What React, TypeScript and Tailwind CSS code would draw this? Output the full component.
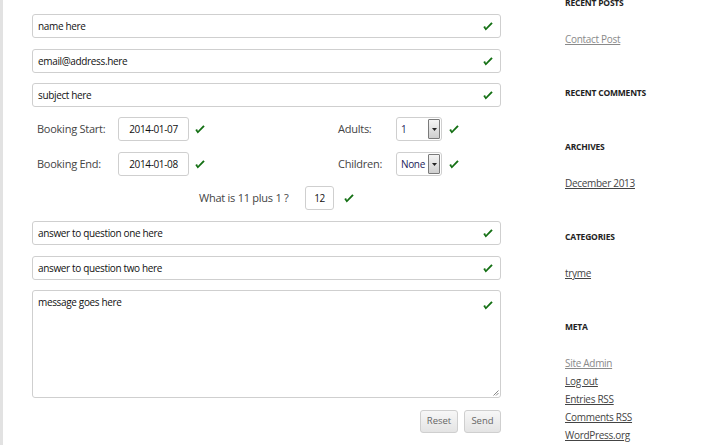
import React from "react";

const font = { fontFamily: '"Open Sans", "Noto Sans", sans-serif' };

function Check({ className = "" }: { className?: string }) {
  return (
    <svg width="10" height="9" viewBox="0 0 10 9" className={`shrink-0 ${className}`}>
      <path d="M0.3 5 L2.7 8.6 L9.7 1.4 L8.3 0.3 L2.9 6 L2.1 4 Z" fill="#136f13" />
    </svg>
  );
}

function TextField({ text, mt }: { text: string; mt: string }) {
  return (
    <div className={`${mt} flex h-[24px] w-[469px] items-center justify-between rounded-[3px] border border-[#cfcfcf] bg-white pl-[5px] pr-[7px]`}>
      <span className="text-[10px] tracking-[-0.35px] text-[#111]">{text}</span>
      <Check />
    </div>
  );
}

function SelectBox({ value }: { value: string }) {
  return (
    <div className="flex h-[24px] w-[46px] shrink-0 items-stretch rounded-[3px] border border-[#cfcfcf] bg-white">
      <div className="flex flex-1 items-center overflow-hidden whitespace-nowrap pl-[4px] text-[10px] tracking-[-0.35px] text-[#1c1c5a]">{value}</div>
      <div className="my-[1px] mr-[1px] flex w-[12px] shrink-0 items-center justify-center rounded-[1px] border border-[#7a7a7a] bg-gradient-to-b from-[#f4f4f4] to-[#cfcfcf]">
        <svg width="5" height="3" viewBox="0 0 5 3">
          <path d="M0 0 L5 0 L2.5 3 Z" fill="#222" />
        </svg>
      </div>
    </div>
  );
}

function SmallBox({ text, w }: { text: string; w: string }) {
  return (
    <div className={`flex h-[24px] ${w} shrink-0 items-center justify-center whitespace-nowrap rounded-[3px] border border-[#cfcfcf] bg-white text-[10px] tracking-[-0.35px] text-[#111]`}>
      {text}
    </div>
  );
}

function Label({ children, w }: { children: React.ReactNode; w: string }) {
  return <span className={`${w} shrink-0 whitespace-nowrap text-[11px] tracking-[-0.25px] text-[#444]`}>{children}</span>;
}

function SideHeading({ children }: { children: React.ReactNode }) {
  return <div className="h-[18px] whitespace-nowrap text-[8.5px] font-bold leading-[18px] tracking-[-0.2px] text-[#222]">{children}</div>;
}

function SideLink({ children, light }: { children: React.ReactNode; light?: boolean }) {
  return (
    <div className={`h-[18px] whitespace-nowrap text-[10px] leading-[18px] tracking-[-0.3px] underline ${light ? "text-[#8a8a8a]" : "text-[#444]"}`}>
      {children}
    </div>
  );
}

export default function App() {
  return (
    <div className="flex h-[445px] w-[701px] overflow-hidden bg-white" style={font}>
      <div className="h-full w-[3px] shrink-0 bg-[#e2e2e2]" />
      <div className="ml-[29px] flex w-[469px] shrink-0 flex-col">
        <TextField text="name here" mt="mt-[14px]" />
        <TextField text="email@address.here" mt="mt-[11px]" />
        <TextField text="subject here" mt="mt-[10px]" />

        <div className="mt-[10px] flex h-[24px] items-center">
          <span className="ml-[5px]" />
          <Label w="w-[81px]">Booking Start:</Label>
          <SmallBox text="2014-01-07" w="w-[71px]" />
          <Check className="ml-[6px]" />
          <span className="ml-[133px]" />
          <Label w="w-[58px]">Adults:</Label>
          <SelectBox value="1" />
          <Check className="ml-[7px]" />
        </div>
        <div className="mt-[11px] flex h-[24px] items-center">
          <span className="ml-[5px]" />
          <Label w="w-[81px]">Booking End:</Label>
          <SmallBox text="2014-01-08" w="w-[71px]" />
          <Check className="ml-[6px]" />
          <span className="ml-[133px]" />
          <Label w="w-[58px]">Children:</Label>
          <SelectBox value="None" />
          <Check className="ml-[7px]" />
        </div>
        <div className="mt-[10px] flex h-[24px] items-center">
          <span className="ml-[167px]" />
          <Label w="w-[106px]">What is 11 plus 1 ?</Label>
          <SmallBox text="12" w="w-[29px]" />
          <Check className="ml-[10px]" />
        </div>

        <TextField text="answer to question one here" mt="mt-[11px]" />
        <TextField text="answer to question two here" mt="mt-[11px]" />

        <div className="relative mt-[10px] flex h-[108px] w-[469px] justify-between rounded-[3px] border border-[#cfcfcf] bg-white pl-[5px] pr-[7px] pt-[4px]">
          <span className="text-[10px] tracking-[-0.35px] text-[#111]">message goes here</span>
          <Check className="mt-[6px]" />
          <svg className="absolute bottom-[1px] right-[1px]" width="6" height="6" viewBox="0 0 6 6">
            <path d="M5.5 0.5 L0.5 5.5 M5.5 3 L3 5.5" stroke="#888" strokeWidth="1" />
          </svg>
        </div>

        <div className="mt-[12px] flex justify-end gap-[6px]">
          <div className="flex h-[23px] w-[38px] items-center justify-center rounded-[3px] border border-[#cfcfcf] bg-gradient-to-b from-[#f7f7f7] to-[#e4e4e4] text-[9.5px] text-[#666]">Reset</div>
          <div className="flex h-[23px] w-[37px] items-center justify-center rounded-[3px] border border-[#cfcfcf] bg-gradient-to-b from-[#f7f7f7] to-[#e4e4e4] text-[9.5px] text-[#666]">Send</div>
        </div>
      </div>

      <div className="ml-[64px] mt-[-6px] flex w-[120px] flex-col">
        <div className="mb-[36px]">
          <SideHeading>RECENT POSTS</SideHeading>
          <div className="mt-[18px]"><SideLink light>Contact Post</SideLink></div>
        </div>
        <div className="mb-[36px]">
          <SideHeading>RECENT COMMENTS</SideHeading>
        </div>
        <div className="mb-[36px]">
          <SideHeading>ARCHIVES</SideHeading>
          <div className="mt-[18px]"><SideLink>December 2013</SideLink></div>
        </div>
        <div className="mb-[36px]">
          <SideHeading>CATEGORIES</SideHeading>
          <div className="mt-[18px]"><SideLink>tryme</SideLink></div>
        </div>
        <div>
          <SideHeading>META</SideHeading>
          <div className="mt-[18px]">
            <SideLink light>Site Admin</SideLink>
            <SideLink>Log out</SideLink>
            <SideLink>Entries RSS</SideLink>
            <SideLink>Comments RSS</SideLink>
            <SideLink>WordPress.org</SideLink>
          </div>
        </div>
      </div>
    </div>
  );
}
